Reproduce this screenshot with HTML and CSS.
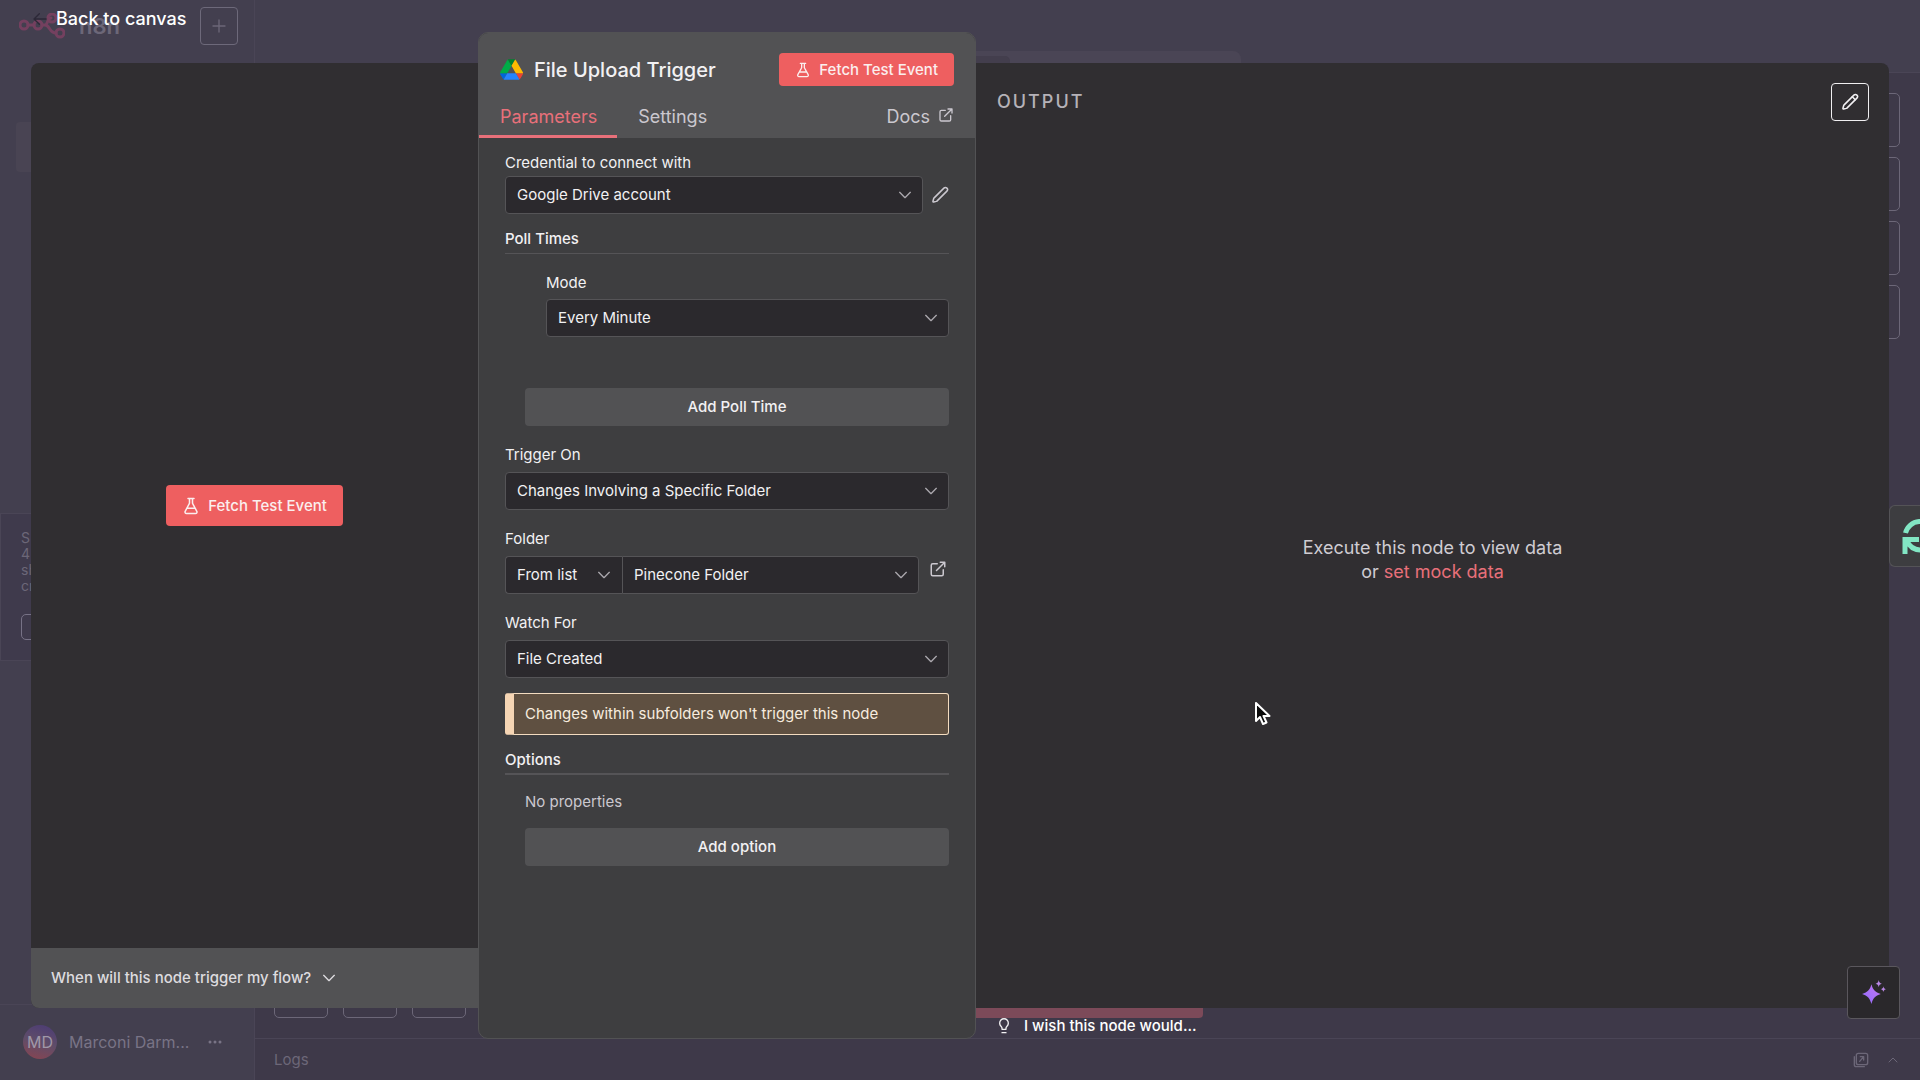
FILE: index.html
```html
<!DOCTYPE html>
<html lang="en">
<head>
<meta charset="utf-8">
<meta name="viewport" content="width=device-width, initial-scale=1">
<title>File Upload Trigger - n8n</title>
<link rel="stylesheet" href="styles.css">
</head>
<body>
<svg class="sprite" aria-hidden="true">
  <symbol id="chevron" viewBox="0 0 24 24"><path d="m4 8 8 8 8-8"/></symbol>
  <symbol id="flask" viewBox="0 0 24 24"><path d="M14 2v6a2 2 0 0 0 .245.96l5.51 10.08A2 2 0 0 1 18 22H6a2 2 0 0 1-1.755-2.96l5.51-10.08A2 2 0 0 0 10 8V2M6.453 15h11.094M8 2h8"/></symbol>
  <symbol id="pencil" viewBox="0 0 24 24"><path d="M21.2 6.800a2.800 2.800 0 0 0-4-4L4.200 15.800a3 3 0 0 0-.7 1.200L2.600 20.300a.9.9 0 0 0 1.100 1.100L7 20.500a3 3 0 0 0 1.200-.7z"/></symbol>
  <symbol id="external" viewBox="0 0 24 24"><path d="M15 3h6v6M10 14 21 3M19 13v6a2 2 0 0 1-2 2H5a2 2 0 0 1-2-2V7a2 2 0 0 1 2-2h6"/></symbol>
</svg>

<div class="app">
  <aside class="sidebar">
    <div class="brand">
      <svg class="brand-logo" viewBox="0 0 46 26" aria-hidden="true"><circle cx="5" cy="12" r="4"/><circle cx="19" cy="12" r="4"/><circle cx="33" cy="5" r="4"/><circle cx="41" cy="20" r="4"/><path d="M9 12h6M23 12h3c3 0 2-7 6-7M26 12c5 0 4 8 11 8"/></svg>
      <span class="brand-name">n8n</span>
      <button class="add-button" aria-label="Create"><svg class="icon-16" viewBox="0 0 24 24"><path d="M3 12h18M12 3v18"/></svg></button>
    </div>
    <div class="nav-item"></div>
    <div class="trial-card">
      <p class="trial-text">S<br>4<br>sh<br>cr</p>
      <div class="trial-button"></div>
    </div>
    <div class="user">
      <span class="avatar">MD</span>
      <span class="user-name">Marconi Darm...</span>
      <svg class="dots" viewBox="0 0 14 4" aria-hidden="true"><circle cx="2" cy="2" r="1.500"/><circle cx="7" cy="2" r="1.500"/><circle cx="12" cy="2" r="1.500"/></svg>
    </div>
  </aside>
  <div class="workspace">
    <div class="topbar"><div class="view-tabs"><div class="view-tab"></div></div></div>
    <div class="canvas">
      <div class="tool-column"><i class="tool"></i><i class="tool"></i><i class="tool"></i><i class="tool"></i></div>
      <div class="tool-row"><i class="tool"></i><i class="tool"></i><i class="tool"></i><b class="run-bar"></b></div>
    </div>
    <div class="logs">
      <span class="logs-title">Logs</span>
      <svg class="icon-16" viewBox="0 0 24 24" aria-hidden="true"><rect x="5" y="2" width="17" height="17" rx="3"/><path d="M2 7v12a3 3 0 0 0 3 3h12M10 14l6-7M11 7h5v5"/></svg>
      <svg class="icon-12 flip" aria-hidden="true"><use href="#chevron"/></svg>
    </div>
  </div>
</div>

<div class="ndv">
  <div class="ndv-top">
    <svg class="icon-16 back-arrow" viewBox="0 0 24 24" aria-hidden="true"><path d="M21 12H4M11 4l-8 8 8 8"/></svg>
    <a class="back" href="#">Back to canvas</a>
  </div>

  <div class="ndv-panes">
    <section class="input-pane">
      <div class="input-empty">
        <button class="primary primary-large"><svg class="icon-18"><use href="#flask"/></svg>Fetch Test Event</button>
      </div>
      <button class="faq">When will this node trigger my flow?<svg class="icon-16"><use href="#chevron"/></svg></button>
    </section>

    <main class="panel">
      <header class="panel-head">
        <div class="title-row">
          <svg class="drive" viewBox="0 0 87 78" aria-hidden="true"><path fill="#0066da" d="m6.600 66.850 3.850 6.650c.8 1.400 1.950 2.500 3.300 3.300l13.750-23.800H0c0 1.550.4 3.100 1.200 4.500z"/><path fill="#00ac47" d="M43.650 25 29.900 1.200c-1.350.8-2.500 1.900-3.300 3.300L1.200 48.500A9 9 0 0 0 0 53h27.500z"/><path fill="#ea4335" d="M73.550 76.800c1.350-.8 2.500-1.900 3.300-3.300l1.600-2.750L86.100 57.500c.8-1.400 1.200-2.950 1.200-4.500H59.800l5.850 11.500z"/><path fill="#00832d" d="M43.650 25 57.400 1.200C56.050.4 54.500 0 52.900 0H34.400c-1.600 0-3.150.45-4.500 1.200z"/><path fill="#2684fc" d="M59.800 53H27.500L13.750 76.800c1.350.8 2.900 1.200 4.500 1.200h50.800c1.600 0 3.150-.45 4.500-1.200z"/><path fill="#ffba00" d="M73.400 26.500 60.700 4.500c-.8-1.400-1.950-2.500-3.300-3.300L43.650 25 59.800 53h27.450c0-1.550-.4-3.100-1.200-4.500z"/></svg>
          <h1 class="title">File Upload Trigger</h1>
          <button class="primary"><svg class="icon-16"><use href="#flask"/></svg>Fetch Test Event</button>
        </div>
        <nav class="tabs">
          <a class="tab tab-active" href="#">Parameters</a>
          <a class="tab" href="#">Settings</a>
          <a class="tab tab-docs" href="#">Docs<svg class="icon-16"><use href="#external"/></svg></a>
        </nav>
      </header>

      <form class="params">
        <div class="field field-tight">
          <label for="credential">Credential to connect with</label>
          <div class="control-row">
            <div class="select"><select id="credential"><option>Google Drive account</option></select><svg class="icon-16"><use href="#chevron"/></svg></div>
            <button type="button" class="icon-button" aria-label="Edit credential"><svg class="icon-18"><use href="#pencil"/></svg></button>
          </div>
        </div>

        <h2 class="section">Poll Times</h2>
        <div class="field field-nested">
          <label for="mode">Mode</label>
          <div class="select"><select id="mode"><option>Every Minute</option></select><svg class="icon-16"><use href="#chevron"/></svg></div>
        </div>
        <button type="button" class="secondary">Add Poll Time</button>

        <div class="field">
          <label for="trigger">Trigger On</label>
          <div class="select"><select id="trigger"><option>Changes Involving a Specific Folder</option></select><svg class="icon-16"><use href="#chevron"/></svg></div>
        </div>

        <div class="field">
          <label for="folder">Folder</label>
          <div class="control-row">
            <div class="joined">
              <div class="select"><select aria-label="Folder mode"><option>From list</option></select><svg class="icon-16"><use href="#chevron"/></svg></div>
              <div class="select"><select id="folder"><option>Pinecone Folder</option></select><svg class="icon-16"><use href="#chevron"/></svg></div>
            </div>
            <a class="icon-button icon-link" href="#" aria-label="Open folder"><svg class="icon-18"><use href="#external"/></svg></a>
          </div>
        </div>

        <div class="field">
          <label for="watch">Watch For</label>
          <div class="select"><select id="watch"><option>File Created</option></select><svg class="icon-16"><use href="#chevron"/></svg></div>
        </div>

        <p class="notice">Changes within subfolders won't trigger this node</p>

        <h2 class="section section-options">Options</h2>
        <p class="none">No properties</p>
        <button type="button" class="secondary">Add option</button>
      </form>
    </main>

    <section class="output-pane">
      <header class="output-head">
        <h2 class="output-title">OUTPUT</h2>
        <button class="edit-output" aria-label="Edit output"><svg class="icon-18" viewBox="0 0 24 24"><use href="#pencil"/><path d="m15 5 4 4"/></svg></button>
      </header>
      <p class="output-empty">Execute this node to view data<br>or <a class="mock" href="#">set mock data</a></p>
    </section>
  </div>

  <div class="ndv-bottom">
    <svg class="icon-16" viewBox="0 0 24 24" aria-hidden="true"><path d="M9 17v-2c0-1-.5-1.700-1.500-2.700A6.500 6.500 0 1 1 16.500 12.300c-1 1-1.500 1.700-1.500 2.700v2zM9 22h6"/></svg>
    <a class="wish" href="#">I wish this node would...</a>
  </div>
</div>

<button class="assistant" aria-label="Assistant">
  <svg class="sparkle" viewBox="0 0 24 24"><defs><linearGradient id="violet" x1="0" y1="1" x2="1" y2="0"><stop offset="0" stop-color="#8f6bff"/><stop offset="1" stop-color="#c478f0"/></linearGradient></defs><path fill="url(#violet)" d="M10 4c1.500 5.500 3.500 7.500 9 9.500-5.500 2-7.500 4-9 9.500-1.500-5.500-3.500-7.500-9-9.500C6.500 11.500 8.500 9.500 10 4z"/><path fill="#b987e6" d="M17 0c.4 2.400 1.100 3 3 3.500-1.900.5-2.600 1.100-3 3.500-.4-2.400-1.100-3-3-3.500 1.900-.5 2.600-1.100 3-3.500zM21.500 6c.3 1.800.9 2.400 2.500 2.800-1.600.4-2.200 1-2.500 2.800-.3-1.800-.9-2.400-2.500-2.800 1.600-.4 2.200-1 2.500-2.800z"/></svg>
</button>
<div class="sync-widget">
  <svg class="sync" viewBox="0 0 36 36" aria-hidden="true"><path d="M3.500 15A15 15 0 0 1 32 13M17 21.500H3V36M5 23a15 15 0 0 0 27 1"/></svg>
</div>
<svg class="pointer" viewBox="0 0 16 24" aria-hidden="true"><path d="M1 1v18l4-4 3 7 3.500-1.500-3-6.500h6z"/></svg>
</body>
</html>
```
FILE: styles.css
```css
:root {
  --chrome: #433f4f;
  --canvas: #3e3949;
  --chrome-line: #4a4556;
  --faded: #6c6778;
  --pane: #302e31;
  --panel: #3e3e40;
  --raised: #525254;
  --input: #2b292d;
  --line: #555457;
  --coral: #ee5f60;
  --coral-text: #e8707a;
  --text: #f2f1f3;
  --muted: #cbc8cf;
}

* { box-sizing: border-box; }

body {
  position: relative;
  margin: 0;
  min-height: 100vh;
  overflow: hidden;
  background: var(--chrome);
  color: var(--text);
  font: 15px/20px Inter, sans-serif;
}

h1, h2, p { margin: 0; font-weight: 500; }
a { color: inherit; text-decoration: none; }
button, select { font: inherit; color: inherit; border: 0; margin: 0; }
svg { flex: none; fill: none; stroke: currentColor; stroke-width: 2; stroke-linecap: round; stroke-linejoin: round; }

.sprite { display: none; }
.icon-12 { width: 12px; height: 12px; }
.icon-16 { width: 16px; height: 16px; }
.icon-18 { width: 18px; height: 18px; }
.flip { transform: rotate(180deg); }

/* Editor behind the dialog */
.app { display: flex; min-height: 100vh; color: var(--faded); }

.sidebar {
  display: flex;
  flex-direction: column;
  width: 255px;
  border-right: 1px solid var(--chrome-line);
}
.brand { display: flex; align-items: center; height: 52px; padding: 0 16px 0 19px; }
.brand-logo { width: 46px; height: 26px; color: #74405f; stroke-width: 3; }
.brand-name { margin-left: 14px; font-size: 22px; line-height: 28px; font-weight: 600; }
.add-button {
  display: grid;
  place-items: center;
  width: 38px;
  height: 38px;
  margin-left: auto;
  padding: 0;
  border: 1px solid #6d697a;
  border-radius: 4px;
  background: none;
}
.nav-item { height: 50px; margin: 70px 16px 0; border-radius: 4px; background: #494453; }
.trial-card {
  height: 148px;
  margin-top: auto;
  padding: 16px 20px;
  border: 1px solid var(--chrome-line);
  background: #3f3a4c;
}
.trial-text { font-size: 14px; line-height: 16px; font-weight: 400; }
.trial-button { height: 26px; margin-top: 20px; border: 1px solid #777286; border-radius: 5px; }
.user {
  display: flex;
  align-items: center;
  height: 76px;
  margin-top: 343px;
  padding: 0 32px 2px 23px;
  border-top: 1px solid var(--chrome-line);
  color: #797486;
  font-size: 16px;
}
.avatar {
  display: grid;
  place-items: center;
  width: 34px;
  height: 34px;
  margin-right: 12px;
  border-radius: 50%;
  background: linear-gradient(195deg, #4b3b75, #5f4d69 50%, #8a4450);
  color: #a098a8;
}
.dots { width: 14px; height: 4px; margin-left: auto; fill: currentColor; stroke: none; }

.workspace { display: flex; flex: 1; flex-direction: column; }
.topbar { display: flex; align-items: flex-end; height: 73px; border-bottom: 1px solid var(--chrome-line); }
.view-tabs { width: 541px; height: 21px; margin-left: 445px; padding-top: 5px; border-radius: 8px 8px 0 0; background: #4a4555; }
.view-tab { width: 310px; height: 16px; border-radius: 5px 5px 0 0; background: #433e4d; }
.canvas {
  display: flex;
  flex: 1;
  flex-direction: column;
  align-items: flex-end;
  justify-content: space-between;
  padding: 20px 20px 20px 19px;
  background: var(--canvas);
}
.tool-column { display: grid; gap: 10px; }
.tool-row { display: flex; gap: 15px; align-self: stretch; }
.tool { width: 54px; height: 54px; border: 1px solid var(--faded); border-radius: 5px; }
.run-bar { width: 260px; height: 54px; margin-left: 462px; border-radius: 4px; background: #7c4a59; }
.logs {
  display: flex;
  align-items: center;
  gap: 18px;
  height: 42px;
  padding: 0 21px 0 19px;
  border-top: 1px solid var(--chrome-line);
  background: var(--canvas);
}
.logs-title { margin-right: auto; }

/* Node detail dialog */
.ndv { position: absolute; inset: 0; display: flex; flex-direction: column; }
.ndv-top { display: flex; align-items: center; gap: 8px; height: 63px; padding: 0 32px 25px; }
.back-arrow { color: #2c2837; }
.back { color: #fff; font-size: 18px; font-weight: 500; }
.ndv-panes {
  display: grid;
  flex: 1;
  grid-template-columns: minmax(0, 447px) 498px minmax(0, 1fr);
  margin: 0 31px;
}
.ndv-bottom {
  display: flex;
  align-items: center;
  gap: 12px;
  height: 72px;
  padding: 0 0 36px 996px;
}
.wish { color: #fff; font-weight: 500; }

.input-pane {
  display: flex;
  flex-direction: column;
  overflow: hidden;
  border-radius: 8px 0 0 8px;
  background: var(--pane);
}
.input-empty { display: grid; flex: 1; place-items: center; }
.faq {
  display: flex;
  align-items: center;
  gap: 10px;
  height: 60px;
  padding: 0 20px;
  background: var(--raised);
  color: #dddbdf;
  font-weight: 500;
}

.primary {
  display: flex;
  align-items: center;
  gap: 8px;
  height: 33px;
  padding: 0 16px;
  border-radius: 4px;
  background: var(--coral);
  color: #fbeeee;
  font-weight: 500;
}
.primary-large { height: 41px; }

.panel {
  display: flex;
  flex-direction: column;
  margin: -31px 0;
  overflow: hidden;
  border: 1px solid var(--raised);
  border-radius: 10px;
  background: var(--panel);
}
.panel-head { background: var(--raised); }
.title-row { display: flex; align-items: center; gap: 11px; padding: 20px 21px 0; }
.drive { width: 23px; height: 21px; stroke: none; }
.title { flex: 1; font-size: 20px; line-height: 24px; }
.tabs { display: flex; margin-top: 9px; padding-right: 21px; color: var(--muted); font-size: 18px; }
.tab { height: 43px; padding: 12px 20px 0 21px; }
.tab-active { color: var(--coral-text); border-bottom: 3px solid var(--coral-text); }
.tab-docs { display: flex; gap: 8px; margin-left: auto; padding-right: 0; }

.params { padding: 15px 26px; }
.field { display: grid; gap: 7px; margin-top: 19px; }
.field-tight { gap: 3px; margin-top: 0; }
.field-nested { gap: 6px; margin: 19px 0 51px 41px; }
.control-row { display: flex; align-items: center; }
.control-row > .select, .joined { flex: 1; }
.select { display: grid; align-items: center; }
.select > * { grid-area: 1 / 1; }
.select select {
  width: 100%;
  height: 38px;
  padding: 0 36px 0 11px;
  border: 1px solid var(--line);
  border-radius: 4px;
  background: var(--input);
  appearance: none;
}
.select svg { justify-self: end; margin-right: 10px; color: #aaa7ad; pointer-events: none; }
.joined { display: grid; grid-template-columns: 117px 1fr; }
.joined .select:first-child select { border-right: 0; border-radius: 4px 0 0 4px; }
.joined .select:last-child select { border-radius: 0 4px 4px 0; }
.icon-button { display: grid; place-items: center; width: 26px; height: 26px; padding: 0 0 0 8px; background: none; color: var(--muted); }
.icon-link { width: 30px; align-self: flex-start; padding-left: 10px; padding-right: 2px; }
.section { margin-top: 15px; padding-bottom: 4px; border-bottom: 1px solid var(--line); font-size: 15px; line-height: 20px; }
.section-options { padding-bottom: 3px; border-bottom-width: 2px; }
.secondary {
  display: block;
  width: calc(100% - 20px);
  height: 38px;
  margin-left: 20px;
  border-radius: 4px;
  background: var(--raised);
  font-weight: 500;
}
.notice {
  margin-top: 15px;
  padding: 10px 11px;
  border: 1px solid #f3dcc0;
  border-left: 9px solid #f5d5b4;
  border-radius: 3px;
  background: #5f5041;
  color: #f7ecdf;
  font-weight: 400;
}
.none { margin: 17px 0 16px 20px; color: var(--muted); font-weight: 400; }

.output-pane { display: flex; flex-direction: column; border-radius: 0 8px 8px 0; background: var(--pane); }
.output-head { display: flex; align-items: center; justify-content: space-between; padding: 20px 20px 0 21px; }
.output-title { color: #b5b2b8; font-size: 18px; line-height: 20px; letter-spacing: 2px; }
.edit-output {
  display: grid;
  place-items: center;
  width: 38px;
  height: 38px;
  padding: 0;
  border: 1px solid #f0eff1;
  border-radius: 4px;
  background: none;
}
.output-empty {
  margin: auto;
  padding-bottom: 10px;
  color: #cfccd2;
  font-size: 18px;
  line-height: 24px;
  font-weight: 400;
  text-align: center;
}
.mock { color: var(--coral-text); }

/* Floating widgets */
.assistant {
  position: absolute;
  right: 20px;
  bottom: 61px;
  display: grid;
  place-items: center;
  width: 53px;
  height: 53px;
  padding: 0;
  border: 1px solid #5a575d;
  border-radius: 4px;
  background: #2a282b;
}
.sparkle { width: 25px; height: 25px; stroke: none; }
.sync-widget {
  position: absolute;
  top: 505px;
  right: 0;
  width: 31px;
  height: 62px;
  padding: 12px 0 0 12px;
  overflow: hidden;
  border: 1px solid #545357;
  border-right: 0;
  border-radius: 6px 0 0 6px;
  background: #3d3d40;
}
.sync { width: 36px; height: 36px; color: #82e6c4; stroke-width: 5; stroke-linecap: butt; stroke-linejoin: miter; }
.pointer { position: absolute; left: 1255px; top: 702px; width: 16px; height: 24px; fill: #0b0b0b; color: #fff; }
```
